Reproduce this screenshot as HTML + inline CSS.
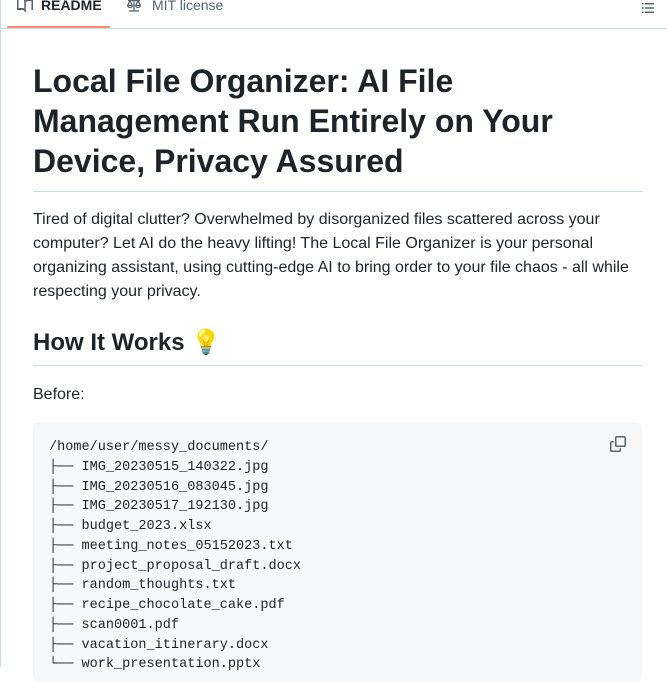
<!DOCTYPE html>
<html><head><meta charset="utf-8"><style>
*{margin:0;padding:0;box-sizing:border-box}
body{width:667px;height:667px;overflow:hidden;background:#fff;font-family:"Liberation Sans",sans-serif;color:#1f2328;position:relative}
.lb{position:absolute;left:0;top:0;width:1px;height:667px;background:#d1d9e0}
.tabs{position:absolute;left:0;top:0;width:667px;height:29px;border-bottom:1px solid #d1d9e0}
.tab{position:absolute;top:-4px;font-size:14px;line-height:18px}
.ul{position:absolute;left:7px;top:26px;width:103px;height:2px;background:#fd8c73;border-radius:1px}
h1{position:absolute;left:33px;top:61px;width:610px;font-size:32px;line-height:40px;font-weight:bold;padding-bottom:10px;border-bottom:1px solid #d1d9e0}
p{position:absolute;left:33px;font-size:16px;line-height:24px;width:600px}
h2{position:absolute;left:33px;top:325px;width:609px;font-size:24px;line-height:36px;font-weight:bold;border-bottom:1px solid #d1d9e0;height:41px}
pre{position:absolute;left:33px;top:422px;width:609px;height:260px;background:#f6f8fa;border-radius:6px;padding:16px 16px;font-family:"Liberation Mono","DejaVu Sans Mono",monospace;font-size:13.55px;line-height:19.75px;color:#1f2328}
</style></head><body>
<div class="lb"></div>
<div class="tabs">
<div class="tab" style="left:17px"><svg width="16" height="16" viewBox="0 0 16 16" style="vertical-align:-3px;margin-right:8px"><path fill="#59636e" d="M0 1.75A.75.75 0 0 1 .75 1h4.25c1.2 0 2.270.57 3 1.45A3.74 3.74 0 0 1 11 1h4.25a.75.75 0 0 1 .75.75v10.5a.75.75 0 0 1-.75.75h-4.5c-.9 0-1.75.5-1.75 1.25a.75.75 0 0 1-1.5 0c0-.75-.85-1.250-1.75-1.25H.75a.75.75 0 0 1-.75-.75Zm7.25 2.5c0-1.24-1-2.25-2.25-2.25H1.5v9h3.75c.8 0 1.45.2 2 .5Zm1.5 9.25c.55-.3 1.2-.5 2-.5h3.75v-9H11c-1.24 0-2.25 1-2.25 2.25Z"/></svg><b>README</b></div>
<div class="tab" style="left:126px;color:#59636e"><svg width="16" height="16" viewBox="0 0 16 16" style="vertical-align:-3px;margin-right:10px"><path fill="none" stroke="#59636e" stroke-width="1.3" d="M8 1v13M3 14h10M2 3.5h12M4 3.5l-2.3 5h4.6zM12 3.5l-2.3 5h4.6zM1.7 8.5a2.3 2 0 0 0 4.6 0M9.7 8.5a2.3 2 0 0 0 4.6 0"/></svg>MIT license</div>
<div class="tab" style="left:640px;color:#59636e"><svg width="16" height="16" viewBox="0 0 16 16" style="margin-top:4px"><path fill="#59636e" d="M2 3h1.5v1.5H2zM5 3h9v1.5H5zM2 7.25h1.5v1.5H2zM5 7.25h9v1.5H5zM2 11.5h1.5V13H2zM5 11.5h9V13H5z"/></svg></div>
<div class="ul"></div>
</div>
<h1>Local File Organizer: AI File<br>Management Run Entirely on Your<br>Device, Privacy Assured</h1>
<p style="top:208px">Tired of digital clutter? Overwhelmed by disorganized files scattered across your computer? Let AI do the heavy lifting! The Local File Organizer is your personal organizing assistant, using cutting-edge AI to bring order to your file chaos - all while respecting your privacy.</p>
<h2>How It Works 💡</h2>
<p style="top:383px">Before:</p>
<pre>/home/user/messy_documents/
├── IMG_20230515_140322.jpg
├── IMG_20230516_083045.jpg
├── IMG_20230517_192130.jpg
├── budget_2023.xlsx
├── meeting_notes_05152023.txt
├── project_proposal_draft.docx
├── random_thoughts.txt
├── recipe_chocolate_cake.pdf
├── scan0001.pdf
├── vacation_itinerary.docx
└── work_presentation.pptx</pre>
<svg width="16" height="16" viewBox="0 0 16 16" style="position:absolute;left:610px;top:436px"><path fill="#59636e" d="M0 6.75C0 5.780.78 5 1.75 5h1.5a.75.75 0 0 1 0 1.5h-1.5a.25.25 0 0 0-.25.25v7.5c0 .14.11.25.25.25h7.5a.25.25 0 0 0 .25-.25v-1.5a.75.75 0 0 1 1.5 0v1.5A1.75 1.75 0 0 1 9.25 16h-7.5A1.75 1.75 0 0 1 0 14.25Z"/><path fill="#59636e" d="M5 1.75C5 .78 5.78 0 6.75 0h7.5C15.22 0 16 .78 16 1.75v7.5A1.75 1.75 0 0 1 14.25 11h-7.5A1.75 1.75 0 0 1 5 9.25Zm1.75-.25a.25.25 0 0 0-.25.25v7.5c0 .14.11.25.25.25h7.5a.25.25 0 0 0 .25-.25v-7.5a.25.25 0 0 0-.25-.25Z"/></svg>
</body></html>
